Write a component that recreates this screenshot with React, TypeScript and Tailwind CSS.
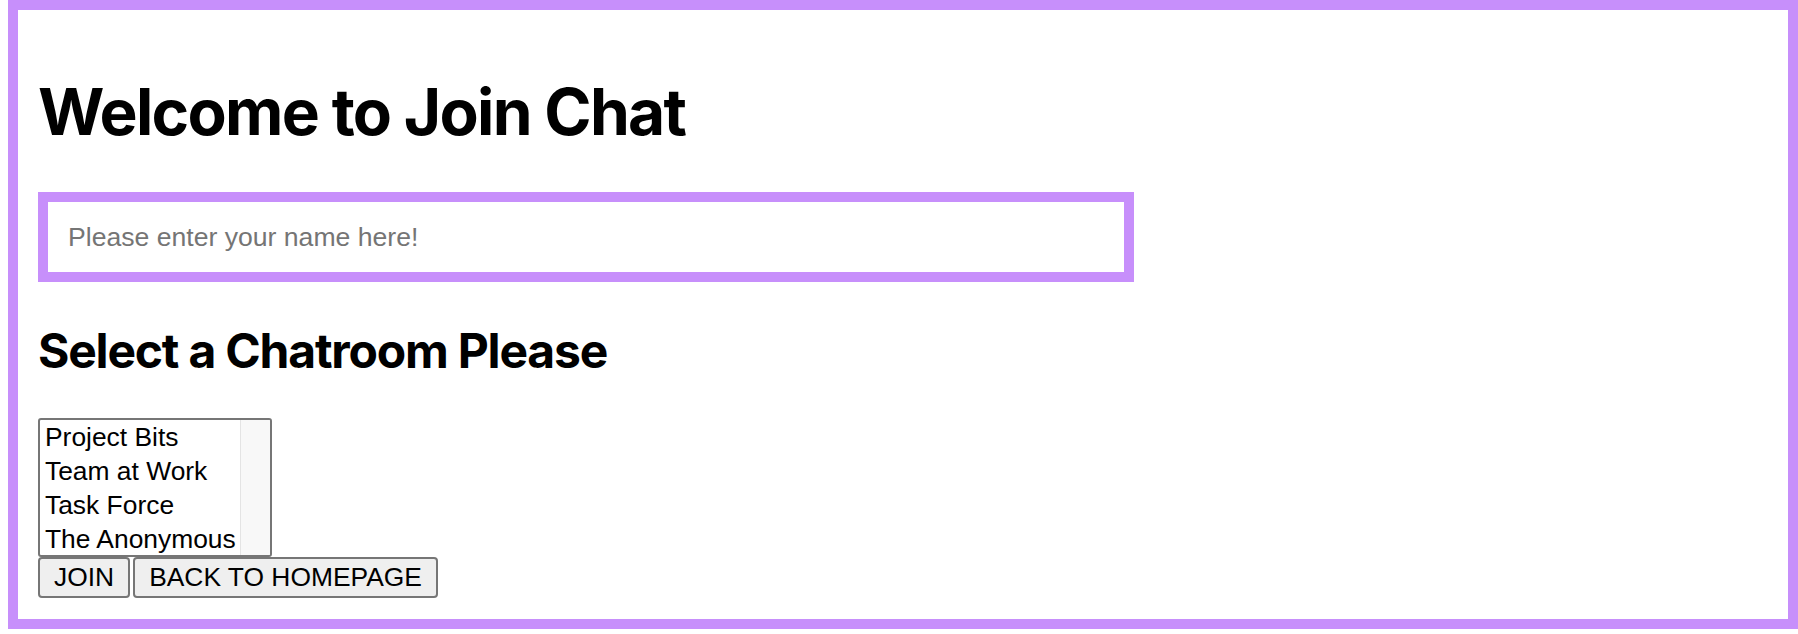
import { useState } from 'react'

const rooms = ['Project Bits', 'Team at Work', 'Task Force', 'The Anonymous']

export default function App() {
  const [name, setName] = useState('')
  const [room, setRoom] = useState<string | null>(null)

  return (
    <div className="ml-2 h-[629px] w-[1790px] border-[10px] border-[#c78ffb] bg-white px-5 pt-5 font-['Inter',sans-serif] text-black">
      <h1 className="mt-[43px] mb-[42px] text-[64px] font-bold leading-[1.21] tracking-[-1.7px]">Welcome to Join Chat</h1>

      <input
        value={name}
        onChange={(e) => setName(e.target.value)}
        placeholder="Please enter your name here!"
        className="block h-[90px] w-[1096px] border-[10px] border-[#c78ffb] bg-white pl-5 font-['Liberation_Sans',Arial,sans-serif] text-[26.6px] text-black outline-none placeholder:text-[#757575]"
      />

      <h2 className="mt-[40px] mb-[37px] text-[48px] font-bold leading-[1.21] tracking-[-1.2px]">Select a Chatroom Please</h2>

      {/* listbox */}
      <div className="flex h-[139px] w-[234px] overflow-hidden rounded-[3px] border-2 border-[#767676] bg-white font-['Liberation_Sans',Arial,sans-serif] text-[26.4px]">
        <div className="flex-1">
          {rooms.map((r) => (
            <div
              key={r}
              onClick={() => setRoom(r)}
              className={`h-[34px] whitespace-nowrap pl-[5px] leading-[34px] ${room === r ? 'bg-[#cecece]' : ''}`}
            >
              {r}
            </div>
          ))}
        </div>
        <div className="w-[30px] border-l border-[#e4e4e4] bg-[#f8f8f8]"></div>
      </div>

      <div className="flex gap-[3px] font-['Liberation_Sans',Arial,sans-serif] text-[26.4px]">
        <button className="h-[41px] rounded-[4px] border-2 border-[#767676] bg-[#efefef] px-[14px] leading-none">JOIN</button>
        <button className="h-[41px] rounded-[4px] border-2 border-[#767676] bg-[#efefef] px-[14px] leading-none">BACK TO HOMEPAGE</button>
      </div>
    </div>
  )
}
